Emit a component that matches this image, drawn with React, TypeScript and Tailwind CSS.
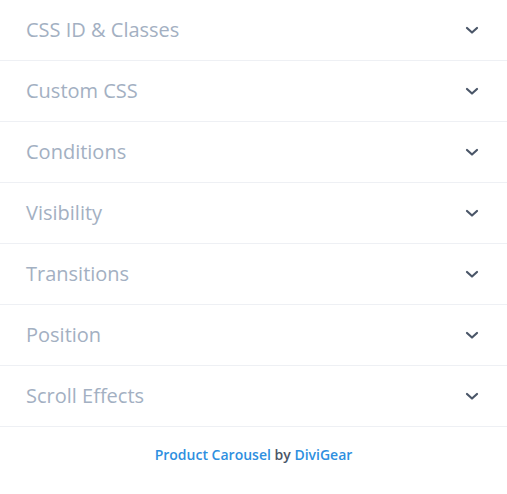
const sections = [
  'CSS ID & Classes',
  'Custom CSS',
  'Conditions',
  'Visibility',
  'Transitions',
  'Position',
  'Scroll Effects',
]

function Chevron() {
  return (
    <svg width="14" height="9" viewBox="0 0 14 9" fill="none" className="text-[#4a5668]">
      <polyline
        points="2,2 7,6.5 12,2"
        stroke="currentColor"
        strokeWidth="2.2"
        strokeLinecap="round"
        strokeLinejoin="round"
      />
    </svg>
  )
}

export default function App() {
  return (
    <div className="min-h-screen w-[507px] bg-white font-['Open_Sans',sans-serif]">
      {sections.map((title) => (
        <div
          key={title}
          className="flex h-[61px] items-center justify-between border-b border-[#eef0f4] pl-[26px] pr-[28px]"
        >
          <span className="text-[20px] text-[#a3b0c2]">{title}</span>
          <Chevron />
        </div>
      ))}
      <div className="pt-[17px] text-center text-[14px] font-semibold text-[#4a5668]">
        <span className="text-[#2e8fe0]">Product Carousel</span> by{' '}
        <span className="text-[#2e8fe0]">DiviGear</span>
      </div>
    </div>
  )
}
